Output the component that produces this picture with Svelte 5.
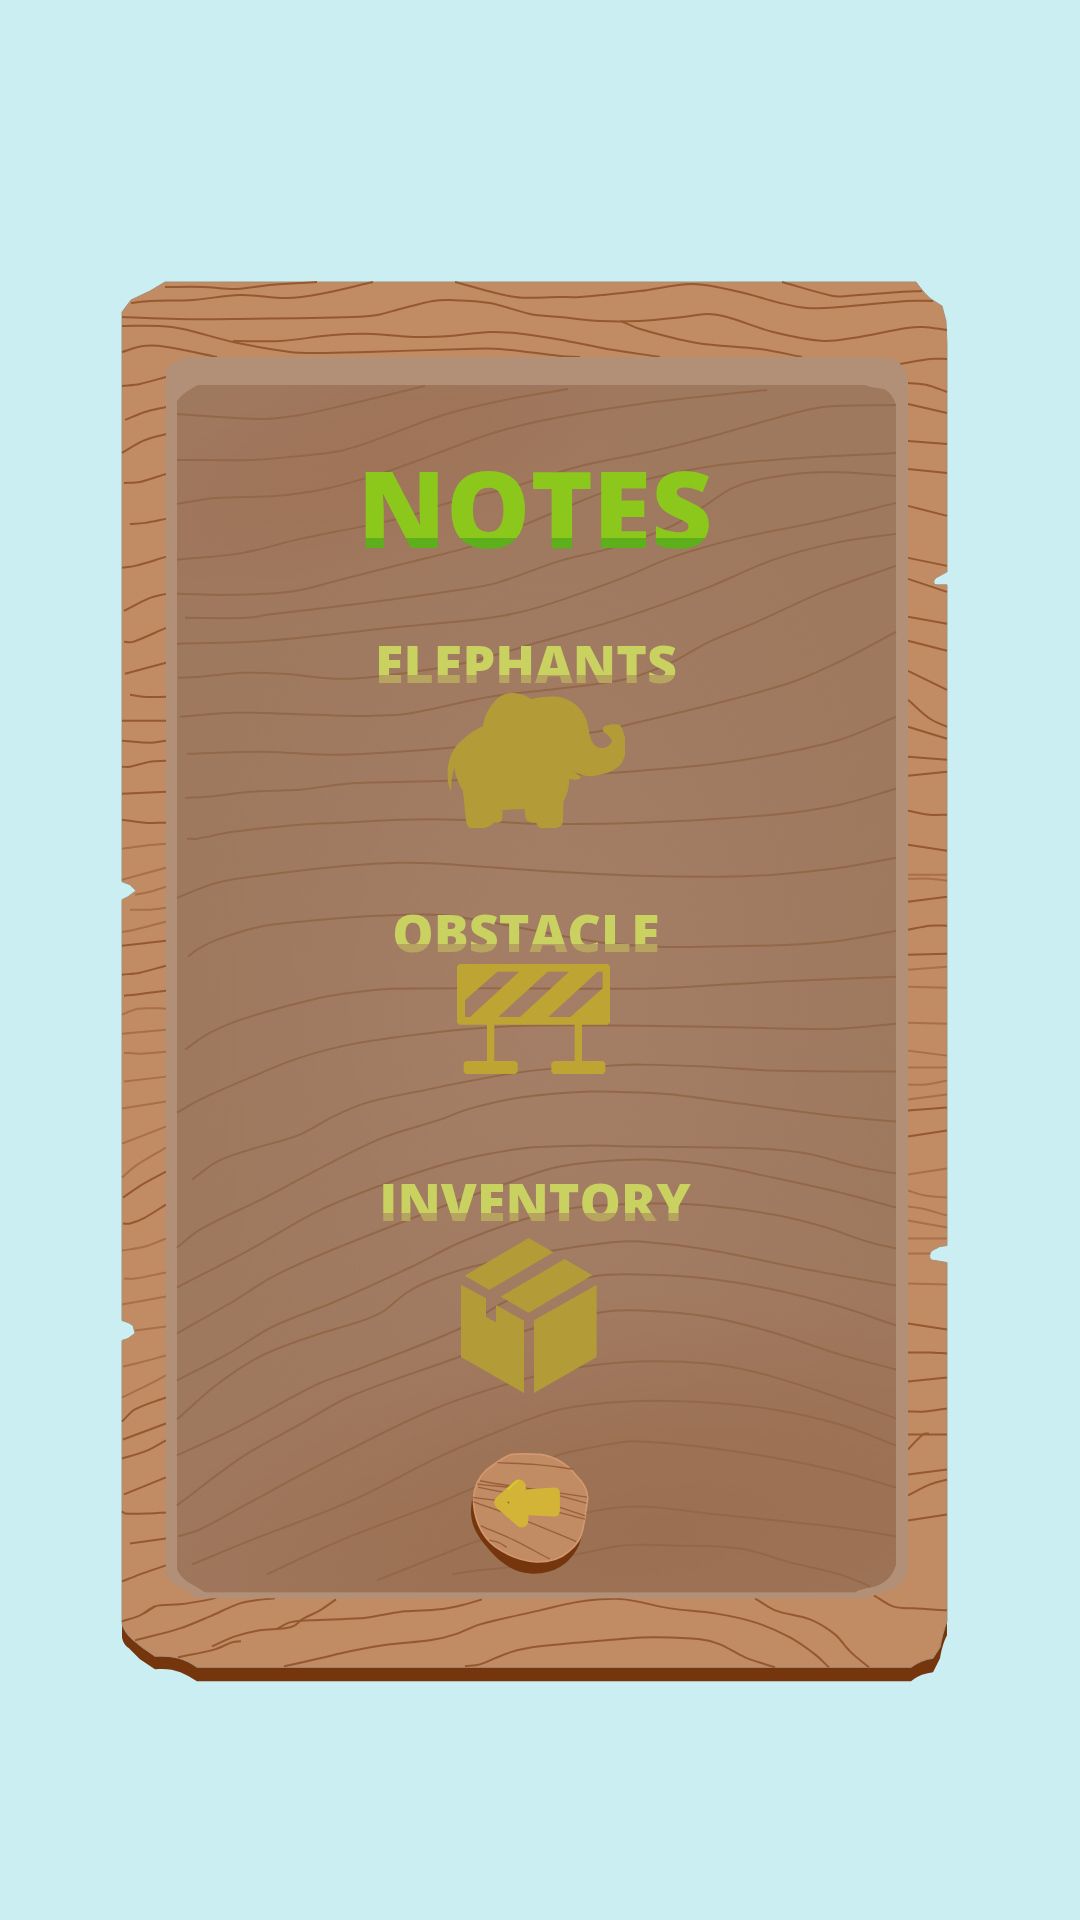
<script>
  // Grain strokes, each a run of x,y points on the board's own drawing grid.
  const topGrain = [
    '165,287 203,287 237,289 270,285 317,282',
    '131,303 150,301 193,300 240,295 287,298 320,294 373,282',
    '122,317 177,319 233,319 353,317 377,315 400,309 433,301 450,300 490,303 530,314 560,317 600,321 640,321 683,317 707,314 727,317 773,332 823,341 853,338 907,328 923,327 947,330',
    '122,326 160,326 183,329 233,342 290,352 317,353 367,352 467,349 500,349 560,356 580,357',
    '233,341 280,341 333,335 373,334 413,337 450,336 490,332 523,334 567,341 607,349 660,357',
    '122,352 143,346 167,347 217,357',
    '455,282 515,297 560,297 580,297 640,291 693,284 740,292 780,303 807,308 840,307 907,301 933,301',
    '782,282 833,296 847,296 900,292 922,291',
    '621,321 640,329 697,343 760,349 802,357',
    '900,364 930,359 947,359'
  ];

  const sideGrain = [
    '908,383 927,385 947,392', '908,404 947,413', '908,441 947,444', '908,469 947,473',
    '908,506 947,516', '908,558 947,566', '908,579 947,592', '908,617 947,624', '908,641 947,651',
    '908,671 947,690', '908,700 930,719 947,727', '908,727 947,739', '908,757 947,760',
    '908,776 947,772', '908,811 930,815 947,815', '908,845 947,851', '908,902 947,897',
    '908,930 930,926 947,926', '908,955 947,954', '908,1111 947,1108', '908,1137 947,1131',
    '908,1324 947,1330', '908,1353 930,1353 947,1354', '908,1382 947,1378', '908,1412 925,1412 947,1409',
    '908,1435 947,1435', '908,1450 923,1435 929,1434', '908,1475 947,1470',
    '908,1496 930,1485 947,1480', '908,1521 947,1515', '874,1596 893,1607 913,1609 947,1611',
    '122,386 140,384 166,377', '125,420 145,412 166,407', '122,453 143,441 166,434',
    '124,483 140,482 166,474', '130,524 145,523 166,519', '122,568 135,566 166,557',
    '124,611 150,598 166,594', '124,642 133,642 166,628', '125,674 166,663', '130,695 143,697 166,697',
    '122,721 166,721', '122,741 150,743 166,741', '122,767 130,767 150,762 166,761', '122,794 166,792',
    '122,820 145,823 166,823', '122,946 166,941', '122,975 140,973 166,966', '124,996 135,995 166,991',
    '123,1198 142,1185 166,1172', '123,1224 130,1224 145,1218 166,1205', '122,1422 135,1410 166,1398',
    '123,1440 166,1424', '122,1459 145,1452 166,1441', '124,1495 166,1478',
    '122,1512 125,1514 150,1514 166,1513', '130,1544 166,1539', '122,1582 140,1575 166,1566'
  ];

  const faintGrain = [
    '908,875 947,875', '908,879 930,879 947,881', '908,970 947,967', '908,987 947,988',
    '908,1023 947,1024', '908,1051 947,1056', '908,1068 947,1068', '908,1085 925,1085 947,1081',
    '908,1100 947,1095', '908,1175 947,1169', '908,1191 925,1196 947,1198', '908,1207 922,1209 947,1216',
    '908,1221 947,1228', '908,1239 947,1239', '908,1254 930,1254', '908,1284 947,1285',
    '122,849 145,846 166,844', '122,880 166,868', '135,895 150,892 166,887', '130,910 150,910 166,908',
    '122,932 130,931 166,922', '122,1015 138,1009 166,1009', '122,1034 166,1030', '124,1053 140,1054 166,1052',
    '124,1082 166,1077', '122,1109 166,1102', '122,1144 166,1127', '122,1178 136,1166 166,1148',
    '122,1251 145,1247 166,1239', '124,1279 135,1279 166,1273', '122,1305 166,1297', '135,1331 166,1327',
    '123,1367 140,1363 166,1356', '122,1398 145,1387 166,1376'
  ];

  const bottomGrain = [
    '122,1622 140,1616 155,1607 180,1605 210,1600 217,1598',
    '144,1614 155,1607',
    '135,1641 180,1629 210,1617 240,1604 263,1600 275,1599',
    '212,1647 235,1637 260,1631 285,1629 295,1626 302,1620 320,1611 336,1600',
    '276,1630 290,1623 310,1621 360,1619 380,1616 405,1612 440,1610 465,1605 482,1600',
    '178,1658 215,1650 232,1643 241,1642',
    '284,1667 320,1659 350,1652 390,1645 430,1641 455,1635 480,1625 540,1611 575,1603 600,1600 625,1600 670,1609 715,1614 755,1623 790,1638 815,1655 829,1668',
    '465,1667 480,1665 510,1653 540,1647 630,1639 655,1638 700,1640 720,1645 745,1658 775,1668',
    '755,1599 775,1611 810,1620 835,1635 850,1652 869,1668'
  ];

  const panelGrain = [
    '177,414 220,417 265,419 300,415 350,404 425,386',
    '177,460 250,460 300,456 340,451 370,442 440,416 500,401 568,389',
    '177,504 215,498 275,496 325,489 383,473 433,455 487,435 540,421 640,404 767,390',
    '177,560 243,553 300,539 360,527 410,516 435,507 472,497 513,487 577,467 653,451 713,436 780,417 823,407 896,405',
    '177,594 230,595 290,592 340,580 407,563 473,546 517,528 572,505 602,493 648,479 707,467 773,460 896,453',
    '185,618 247,618 267,615 367,603 460,590 497,583 560,561 612,548 670,527 703,507 733,488 773,477 827,472 896,476',
    '177,644 267,641 400,627 490,618 540,607 623,578 673,557 740,538 823,521 896,503',
    '178,678 200,677 243,673 283,674 343,679 407,673 470,662 540,642 623,618 707,588 773,560 840,542 896,534',
    '180,717 233,713 287,714 347,716 373,716 407,714 490,697 557,689 627,679 673,662 707,643 757,622 823,592 896,566',
    '187,754 263,752 340,755 450,748 590,733 640,722 707,706 790,683 843,660 896,632',
    '185,798 207,797 250,792 300,790 347,784 447,781 613,773 640,771 707,765 773,755 840,740 896,717',
    '187,839 197,839 233,832 300,825 340,823 400,820 457,820 540,824 640,823 773,815 840,805 896,789',
    '177,898 217,883 267,875 347,866 400,863 440,864 540,871 640,876 723,877 773,875 840,868 896,858',
    '188,957 197,950 217,940 260,927 300,922 360,917 437,915 493,923 540,932 603,943 660,947 707,947 790,945 840,941 896,931',
    '185,1050 210,1033 250,1017 320,998 360,992 393,989 610,989 640,989 690,987 773,982 896,977',
    '177,1113 200,1100 250,1078 300,1058 360,1043 460,1030 527,1026 640,1026 707,1027 790,1029 840,1029 896,1024',
    '192,1180 217,1162 250,1150 300,1135 333,1117 367,1103 427,1090 493,1077 543,1070 610,1066 640,1065 707,1067 773,1071 896,1072',
    '177,1248 200,1230 267,1197 333,1162 383,1138 440,1120 470,1109 520,1098 590,1092 640,1093 673,1095 740,1104 840,1117 896,1122',
    '177,1288 250,1250 317,1212 383,1185 440,1166 480,1156 530,1148 590,1146 640,1147 757,1149 807,1154 857,1167 896,1174',
    '177,1334 233,1302 273,1277 333,1250 440,1208 503,1185 560,1167 640,1160 707,1165 773,1178 840,1193 896,1208',
    '177,1381 227,1355 273,1327 333,1303 410,1268 460,1243 523,1220 577,1208 653,1204 707,1206 773,1215 823,1227 867,1242 896,1249',
    '177,1420 217,1385 260,1357 317,1335 360,1322 383,1312 407,1293 433,1280 473,1267 553,1251 610,1243 640,1242 707,1250 807,1270 896,1286',
    '177,1456 233,1430 317,1385 360,1369 460,1329 510,1300 593,1277 640,1275 707,1279 773,1290 840,1307 896,1326',
    '177,1506 243,1457 300,1425 350,1397 460,1357 523,1332 600,1313 640,1311 707,1317 773,1333 840,1355 896,1370',
    '178,1537 200,1530 250,1503 317,1467 433,1410 523,1380 577,1368 640,1362 707,1364 757,1373 823,1393 896,1419',
    '192,1565 253,1540 350,1502 440,1457 503,1430 560,1410 627,1402 707,1403 773,1410 840,1425 896,1446',
    '267,1575 343,1540 440,1503 477,1487 557,1456 620,1443 640,1442 690,1446 773,1458 840,1472 896,1488',
    '377,1581 440,1556 477,1542 587,1513 640,1507 707,1514 840,1528 896,1537',
    '452,1575 477,1571 507,1568 577,1555 623,1546 673,1546 740,1549 790,1563 840,1575 870,1587'
  ];

  const discGrain = [
    '172,99 290,105 398,118', '120,153 170,162 440,202', '112,163 300,185 438,220',
    '114,172 270,205 434,258', '98,203 260,225 434,268', '100,216 250,270 408,335',
    '122,288 220,330 328,387', '148,331 176,338 200,352'
  ];

  // Turns a run of points into one flowing curve through all of them.
  function curve(run) {
    const p = run.split(' ').map((pair) => pair.split(',').map(Number));
    let d = `M${p[0]}`;
    for (let i = 0; i < p.length - 1; i++) {
      const a = p[Math.max(i - 1, 0)];
      const b = p[i];
      const c = p[i + 1];
      const e = p[Math.min(i + 2, p.length - 1)];
      const third = (c[0] - b[0]) / 3;
      const slope = (m, n) => (n[0] === m[0] ? 0 : (n[1] - m[1]) / (n[0] - m[0]));
      d += `C${b[0] + third} ${b[1] + third * slope(a, c)} ${c[0] - third} ${c[1] - third * slope(b, e)} ${c}`;
    }
    return d;
  }

  const notes = [
    { id: 'elephants', label: 'ELEPHANTS' },
    { id: 'obstacle', label: 'OBSTACLE' },
    { id: 'inventory', label: 'INVENTORY' }
  ];
</script>

<main class="page">
  <div class="board">
    <svg class="wood" viewBox="122 282 826 1401" preserveAspectRatio="none" aria-hidden="true">
      <defs>
        <radialGradient id="glow-mid" cx="0.52" cy="0.52" r="0.5">
          <stop offset="0" stop-color="#a68069" stop-opacity="0.7" />
          <stop offset="1" stop-color="#a68069" stop-opacity="0" />
        </radialGradient>
        <radialGradient
          id="glow-top"
          gradientUnits="userSpaceOnUse"
          cx="0"
          cy="0"
          r="1"
          gradientTransform="translate(370 460) rotate(-20) scale(330 130)"
        >
          <stop offset="0" stop-color="#a07257" stop-opacity="0.8" />
          <stop offset="1" stop-color="#a07257" stop-opacity="0" />
        </radialGradient>
        <radialGradient
          id="glow-low"
          gradientUnits="userSpaceOnUse"
          cx="0"
          cy="0"
          r="1"
          gradientTransform="translate(660 1530) rotate(-8) scale(620 240)"
        >
          <stop offset="0" stop-color="#9b7052" />
          <stop offset="0.4" stop-color="#9c7154" stop-opacity="0.9" />
          <stop offset="1" stop-color="#a07257" stop-opacity="0" />
        </radialGradient>
        <path
          id="panel-shape"
          d="M198 385H865C872 388 878 388 884 389C890 392 894 398 896 405V1565C893 1575 887 1584 872 1588C866 1589 860 1590 855 1593H205C198 1588 192 1585 187 1582C180 1576 177 1572 177 1568V401C182 394 190 389 198 385Z"
        />
      </defs>
      <path
        class="edge"
        d="M122 1600V1638C123 1644 126 1647 129 1649L140 1660L155 1670C172 1668 184 1673 197 1682H911C918 1676 926 1674 933 1673L940 1659C942 1648 944 1642 947 1636V1600Z"
      />
      <path
        class="face"
        d="M165 282H916C922 290 926 295 931 299L942 306L946 321L947 344V572L936 578C932 582 934 585 937 585H947V1246L940 1247L932 1251C928 1256 929 1261 935 1261L947 1263V1622C944 1630 942 1638 940 1648L933 1659C925 1660 918 1663 911 1668H197C185 1659 172 1656 155 1657L142 1648L131 1639C126 1634 123 1629 122 1624V1341L128 1339L132 1336L135 1334L133 1326L128 1323L122 1321V900L128 897L136 891L130 885L122 882V312L131 300L150 291Z"
      />
      <g class="grain">
        {#each [...topGrain, ...sideGrain, ...bottomGrain] as run}
          <path d={curve(run)} />
        {/each}
      </g>
      <g class="grain faint">
        {#each faintGrain as run}
          <path d={curve(run)} />
        {/each}
      </g>
      <path
        class="bevel"
        d="M187 357H877C882 359 887 359 891 359C900 361 906 369 908 378V1570C905 1580 900 1590 882 1593L865 1599H196C188 1592 181 1588 176 1586C168 1580 166 1577 166 1572V370C172 363 179 359 187 357Z"
      />
      <use href="#panel-shape" class="panel" />
      <use href="#panel-shape" fill="url(#glow-mid)" />
      <use href="#panel-shape" fill="url(#glow-top)" />
      <use href="#panel-shape" fill="url(#glow-low)" />
      <g class="grain inner">
        {#each panelGrain as run}
          <path d={curve(run)} />
        {/each}
      </g>
    </svg>

    <div class="content">
      <h1>NOTES</h1>

      <div class="notes">
        {#each notes as note}
          <section class="note {note.id}">
            <h2>{note.label}</h2>
            {#if note.id === 'elephants'}
              <svg class="icon" viewBox="314 752 540 414" aria-hidden="true">
                <path
                  d="M428 857C432 825 448 800 466 780C490 752 538 750 573 777C600 768 625 767 655 769C705 780 735 812 744 860C747 885 752 905 765 916C775 925 795 925 803 917C812 910 818 903 813 897C805 885 795 880 789 873C785 862 790 857 800 855C815 851 830 850 838 854C845 860 852 880 857 905C860 925 855 950 843 970C835 980 815 992 800 998C780 1003 760 1008 748 1008C730 1007 710 1000 697 990C705 1000 718 1003 722 1011C718 1020 705 1020 686 1015C688 1040 680 1065 670 1083L668 1140C667 1158 655 1164 640 1163L605 1164C595 1163 592 1155 587 1147C570 1148 560 1143 557 1135C554 1125 554 1115 552 1106L487 1109C486 1120 488 1132 484 1141C478 1148 468 1147 459 1147C454 1158 435 1164 415 1163L390 1163C378 1160 378 1145 375 1125C372 1100 372 1075 367 1050C355 1030 343 1005 343 980C334 1000 333 1030 332 1053C325 1040 321 1020 322 995C322 950 345 915 365 900C385 880 405 868 428 857Z"
                />
              </svg>
            {:else if note.id === 'obstacle'}
              <svg class="icon" viewBox="294 210 462 345" aria-hidden="true">
                <path
                  fill-rule="evenodd"
                  d="M298 222H743L750 229V397L743 404H666V513H730L736 519V545L730 552H581L574 545V519L581 513H644V404H403V513H466L473 519V545L466 552H318L311 545V519L318 513H381V404H298L291 397V229ZM412 245L315 331V381H330L478 245ZM563 245L415 381H480L627 245ZM713 245L565 381H631L728 295V245Z"
                />
              </svg>
            {:else}
              <svg class="icon" viewBox="300 207 444 493" aria-hidden="true">
                <path
                  d="M503 234L577 277L385 390L311 347ZM611 297L694 346L503 458L418 410ZM300 374L375 415V471L405 487V435L489 482V699L300 591ZM707 374V591L519 699V481Z"
                />
              </svg>
            {/if}
          </section>
        {/each}
      </div>

      <button class="back" type="button" aria-label="Back">
        <svg viewBox="90 70 356 363" aria-hidden="true">
          <path
            class="edge"
            d="M98 200C88 250 92 285 120 325C165 388 215 431 280 431C345 431 385 400 410 358C422 335 426 310 432 270Z"
          />
          <path
            class="disc"
            d="M215 74C245 71 280 74 300 74C350 80 385 108 410 140C435 165 443 185 442 208C438 235 434 265 430 285C424 325 410 345 385 365C360 388 325 396 290 396C240 393 200 375 165 350C120 315 100 260 100 205C103 170 118 140 140 120C165 103 190 80 215 74Z"
          />
          {#each discGrain as run}
            <path class="scratch" d={curve(run)} />
          {/each}
          <path
            class="arrow"
            d="M170 202L222 155C234 144 252 150 257 166V179L343 173C354 173 359 181 359 190V242C358 254 352 260 342 260L265 256L264 276C261 291 247 297 233 289L172 236C160 225 160 212 170 202Z"
          />
          <path class="shine" d="M200 177L224 157C229 152 234 150 240 150C228 158 216 172 206 181Z" />
          <circle class="peg" cx="205" cy="218" r="3" />
        </svg>
      </button>
    </div>
  </div>
</main>

<style>
  :global(body) {
    margin: 0;
    background: #cbeef2;
  }

  .page {
    min-height: 100vh;
    box-sizing: border-box;
    padding: 282px 132px 237px 122px;
    font-family: 'Open Sans', 'Noto Sans', sans-serif;
  }

  .board {
    display: grid;
  }

  .wood,
  .content {
    grid-area: 1 / 1;
  }

  .wood {
    width: 100%;
    height: 100%;
    min-height: 0;
    contain: size;
    overflow: visible;
  }

  .edge {
    fill: #75350d;
  }

  .face {
    fill: #c18b64;
    stroke: #a89078;
    stroke-width: 1;
  }

  .grain path {
    fill: none;
    stroke: #96592f;
    stroke-width: 2;
  }

  .faint path {
    stroke: #a96f47;
  }

  .bevel {
    fill: #b29077;
  }

  .panel {
    fill: #9f795e;
  }

  .inner path {
    stroke: #936849;
  }

  .content {
    display: flex;
    flex-direction: column;
    align-items: center;
    padding: 165px 0 108px;
  }

  h1,
  h2 {
    margin: 0;
    font-weight: 800;
    color: transparent;
    background-clip: text;
    -webkit-background-clip: text;
  }

  h1 {
    font-size: 106px;
    line-height: 120px;
    background-image: linear-gradient(#8bc81b 91px, #5daf1b 91px);
  }

  h2 {
    font-size: 52px;
    line-height: 56px;
    background-image: linear-gradient(#c9d161 40px, #b7a55f 40px);
  }

  .notes {
    display: grid;
    grid-auto-rows: minmax(269px, auto);
    margin-top: 68px;
  }

  .note {
    display: flex;
    flex-direction: column;
    align-items: center;
  }

  .elephants h2,
  .obstacle h2 {
    padding-right: 18px;
  }

  .icon {
    display: block;
    fill: #b39b38;
  }

  .elephants .icon {
    width: 180px;
  }

  .obstacle .icon {
    width: 154px;
    overflow: visible;
    fill: #bea432;
  }

  .inventory .icon {
    width: 148px;
  }

  .back {
    margin-top: 11px;
    padding: 0 12px 0 0;
    border: 0;
    background: none;
    cursor: pointer;
  }

  .back svg {
    display: block;
    width: 119px;
    overflow: visible;
  }

  .disc {
    fill: #c18b64;
    stroke: #d5986e;
    stroke-width: 5;
  }

  .scratch {
    fill: none;
    stroke: #98603a;
    stroke-width: 4;
  }

  .arrow {
    fill: #d3b437;
  }

  .shine {
    fill: #d2cd2f;
  }

  .peg {
    fill: #8a7420;
  }
</style>
